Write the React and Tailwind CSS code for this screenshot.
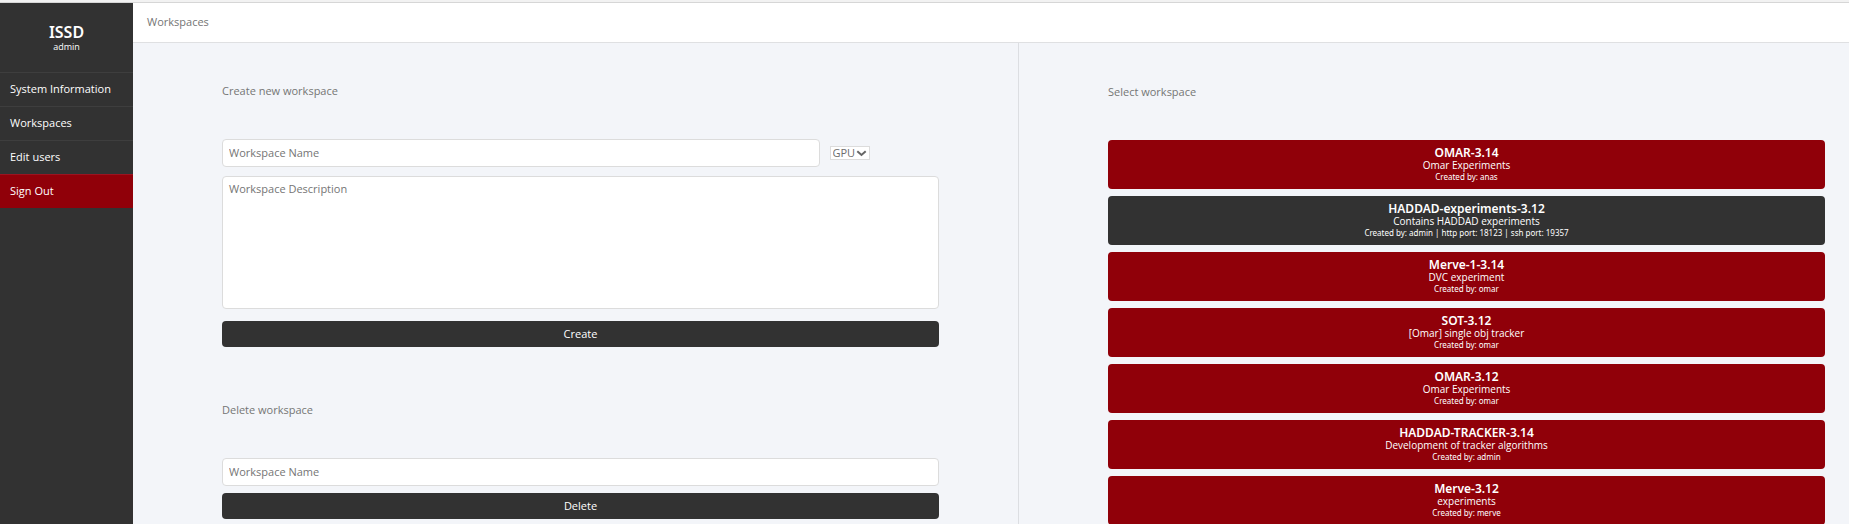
import React from "react";

const navItems = ["System Information", "Workspaces", "Edit users"];

const workspaces = [
  { name: "OMAR-3.14", description: "Omar Experiments", meta: "Created by: anas" },
  {
    name: "HADDAD-experiments-3.12",
    description: "Contains HADDAD experiments",
    meta: "Created by: admin | http port: 18123 | ssh port: 19357",
    running: true,
  },
  { name: "Merve-1-3.14", description: "DVC experiment", meta: "Created by: omar" },
  { name: "SOT-3.12", description: "[Omar] single obj tracker", meta: "Created by: omar" },
  { name: "OMAR-3.12", description: "Omar Experiments", meta: "Created by: omar" },
  { name: "HADDAD-TRACKER-3.14", description: "Development of tracker algorithms", meta: "Created by: admin" },
  { name: "Merve-3.12", description: "experiments", meta: "Created by: merve" },
];

const fieldClass =
  "block rounded border border-[#dcdcdc] bg-white px-1.5 text-[11px] leading-4 text-[#333] placeholder:text-[#757575] placeholder:opacity-100";

function Sidebar() {
  return (
    <aside className="w-[133px] shrink-0 bg-[#323232] text-white">
      <div className="flex h-[69px] flex-col items-center pt-5 text-center">
        <h1 className="font-['Noto_Sans',sans-serif] text-base leading-[18px] font-semibold">ISSD</h1>
        <p className="text-[9px] leading-3">admin</p>
      </div>
      <nav>
        {navItems.map((item) => (
          <a key={item} href="#" className="flex h-[34px] items-center border-t border-[#3e3e3e] px-2.5 text-[11px]">
            {item}
          </a>
        ))}
        <a href="#" className="flex h-[34px] items-center border-t border-[#9b1420] bg-[#900009] px-2.5 text-[11px]">
          Sign Out
        </a>
      </nav>
    </aside>
  );
}

function SubmitButton({ children }) {
  return (
    <button type="submit" className="block h-[26px] w-full rounded bg-[#323232] text-[11px] text-white">
      {children}
    </button>
  );
}

function CreateForm() {
  return (
    <form onSubmit={(e) => e.preventDefault()}>
      <h2 className="mb-10 text-[11px] leading-4">Create new workspace</h2>
      <div className="flex items-center gap-2.5">
        <input aria-label="Workspace Name" placeholder="Workspace Name" className={`${fieldClass} h-7 w-5/6 pb-0.5`} />
        <div className="relative flex items-center">
          <select
            aria-label="Device"
            className="h-[14px] w-10 appearance-none border border-[#dcdcdc] bg-white pl-0.5 text-[11px] leading-3 text-[#6c6c6c]"
          >
            <option>GPU</option>
            <option>CPU</option>
          </select>
          <svg
            className="pointer-events-none absolute right-[3px] h-[7px] w-[11px]"
            viewBox="0 0 11 7"
            fill="none"
            stroke="#666"
            strokeWidth="2"
            aria-hidden="true"
          >
            <path d="M1.3 1.2 5.5 5l4.2-3.8" />
          </svg>
        </div>
      </div>
      <textarea
        aria-label="Workspace Description"
        placeholder="Workspace Description"
        className={`${fieldClass} mt-[9px] mb-3 h-[133px] w-full resize-none py-1`}
      />
      <SubmitButton>Create</SubmitButton>
    </form>
  );
}

function DeleteForm() {
  return (
    <form onSubmit={(e) => e.preventDefault()}>
      <h2 className="mb-10 text-[11px] leading-4">Delete workspace</h2>
      <input
        aria-label="Workspace Name"
        placeholder="Workspace Name"
        className={`${fieldClass} mb-[7px] h-7 w-full pb-0.5`}
      />
      <SubmitButton>Delete</SubmitButton>
    </form>
  );
}

function WorkspaceCard({ name, description, meta, running }) {
  return (
    <button
      type="button"
      className={`block w-full rounded py-1.5 text-center text-white ${running ? "bg-[#323232]" : "bg-[#900009]"}`}
    >
      <span className="block text-xs leading-[14px] font-semibold">{name}</span>
      <span className="block font-['Open_Sans',sans-serif] text-[10px] leading-[11px]">{description}</span>
      <span className="block text-[8px] leading-3">{meta}</span>
    </button>
  );
}

export default function App() {
  return (
    <div className="flex h-screen flex-col overflow-hidden bg-[#f3f5f9] font-['Open_Sans',sans-serif] text-[#757575]">
      <div className="h-[3px] shrink-0 border-b border-[#d6d6d6] bg-[#f2f2f2]" />
      <div className="flex min-h-0 flex-1">
        <Sidebar />
        <div className="flex min-w-0 flex-1 flex-col">
          <header className="flex h-10 shrink-0 items-center border-b border-[#dfe0e2] bg-white px-3.5 text-[11px]">
            Workspaces
          </header>
          <main className="flex min-h-0 flex-1">
            <section className="flex flex-1 flex-col gap-[55px] border-r border-[#dcdee2] pt-10 pr-[79px] pl-[89px]">
              <CreateForm />
              <DeleteForm />
            </section>
            <section className="flex-1 pt-[41px] pr-6 pl-[89px]">
              <h2 className="mb-10 text-[11px] leading-4">Select workspace</h2>
              <div className="flex flex-col gap-[7px] font-['Noto_Sans',sans-serif]">
                {workspaces.map((w) => (
                  <WorkspaceCard key={w.name} {...w} />
                ))}
              </div>
            </section>
          </main>
        </div>
      </div>
    </div>
  );
}
